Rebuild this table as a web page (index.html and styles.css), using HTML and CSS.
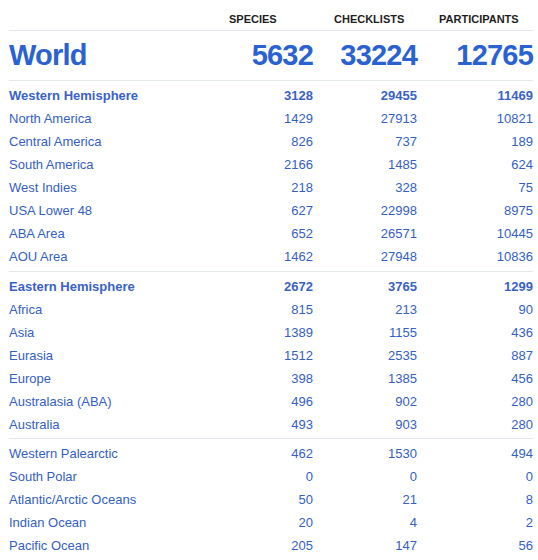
FILE: index.html
```html
<!DOCTYPE html>
<html>
<head>
<meta charset="utf-8">
<link rel="stylesheet" href="styles.css">
</head>
<body>
<div class="stats">
  <div class="row head">
    <span></span><span>Species</span><span>Checklists</span><span>Participants</span>
  </div>
  <div class="row world">
    <span>World</span><span>5632</span><span>33224</span><span>12765</span>
  </div>
  <div class="group">
    <div class="row strong"><span>Western Hemisphere</span><span>3128</span><span>29455</span><span>11469</span></div>
    <div class="row"><span>North America</span><span>1429</span><span>27913</span><span>10821</span></div>
    <div class="row"><span>Central America</span><span>826</span><span>737</span><span>189</span></div>
    <div class="row"><span>South America</span><span>2166</span><span>1485</span><span>624</span></div>
    <div class="row"><span>West Indies</span><span>218</span><span>328</span><span>75</span></div>
    <div class="row"><span>USA Lower 48</span><span>627</span><span>22998</span><span>8975</span></div>
    <div class="row"><span>ABA Area</span><span>652</span><span>26571</span><span>10445</span></div>
    <div class="row"><span>AOU Area</span><span>1462</span><span>27948</span><span>10836</span></div>
  </div>
  <div class="group tight">
    <div class="row strong"><span>Eastern Hemisphere</span><span>2672</span><span>3765</span><span>1299</span></div>
    <div class="row"><span>Africa</span><span>815</span><span>213</span><span>90</span></div>
    <div class="row"><span>Asia</span><span>1389</span><span>1155</span><span>436</span></div>
    <div class="row"><span>Eurasia</span><span>1512</span><span>2535</span><span>887</span></div>
    <div class="row"><span>Europe</span><span>398</span><span>1385</span><span>456</span></div>
    <div class="row"><span>Australasia (ABA)</span><span>496</span><span>902</span><span>280</span></div>
    <div class="row"><span>Australia</span><span>493</span><span>903</span><span>280</span></div>
  </div>
  <div class="group last">
    <div class="row"><span>Western Palearctic</span><span>462</span><span>1530</span><span>494</span></div>
    <div class="row"><span>South Polar</span><span>0</span><span>0</span><span>0</span></div>
    <div class="row"><span>Atlantic/Arctic Oceans</span><span>50</span><span>21</span><span>8</span></div>
    <div class="row"><span>Indian Ocean</span><span>20</span><span>4</span><span>2</span></div>
    <div class="row"><span>Pacific Ocean</span><span>205</span><span>147</span><span>56</span></div>
  </div>
</div>
</body>
</html>
```

FILE: styles.css
```css
html, body {
  margin: 0;
  padding: 0;
  background: #ffffff;
}

body {
  font-family: "Liberation Sans", Arial, Helvetica, sans-serif;
  color: #3460c2;
}

.stats {
  width: 524px;
  margin-left: 9px;
}

.row {
  display: grid;
  grid-template-columns: 220px 84px 21px 83px 22px 94px;
  align-items: center;
  height: 23px;
  font-size: 13px;
  line-height: 23px;
}

.row > span:nth-child(2) { grid-column: 2; }
.row > span:nth-child(3) { grid-column: 4; }
.row > span:nth-child(4) { grid-column: 6; }

.row > span:not(:first-child) {
  text-align: right;
}

.head {
  height: 31px;
  line-height: 14px;
  padding-top: 7px;
  box-sizing: border-box;
  font-size: 11px;
  font-weight: bold;
  text-transform: uppercase;
  color: #1e1e1e;
  border-bottom: 1px solid #e3e6ea;
}

.head > span:not(:first-child) {
  text-align: left;
}

.world {
  height: 49px;
  line-height: 49px;
  font-size: 29px;
  font-weight: bold;
  letter-spacing: -0.8px;
  color: #2a62d1;
  border-bottom: 1px solid #e3e6ea;
}

.group {
  padding: 3px 0 3px;
  border-bottom: 1px solid #e3e6ea;
}

.group.tight {
  padding-bottom: 2px;
}

.group.last {
  border-bottom: none;
}

.strong {
  font-weight: bold;
  color: #3a62c4;
}
```
